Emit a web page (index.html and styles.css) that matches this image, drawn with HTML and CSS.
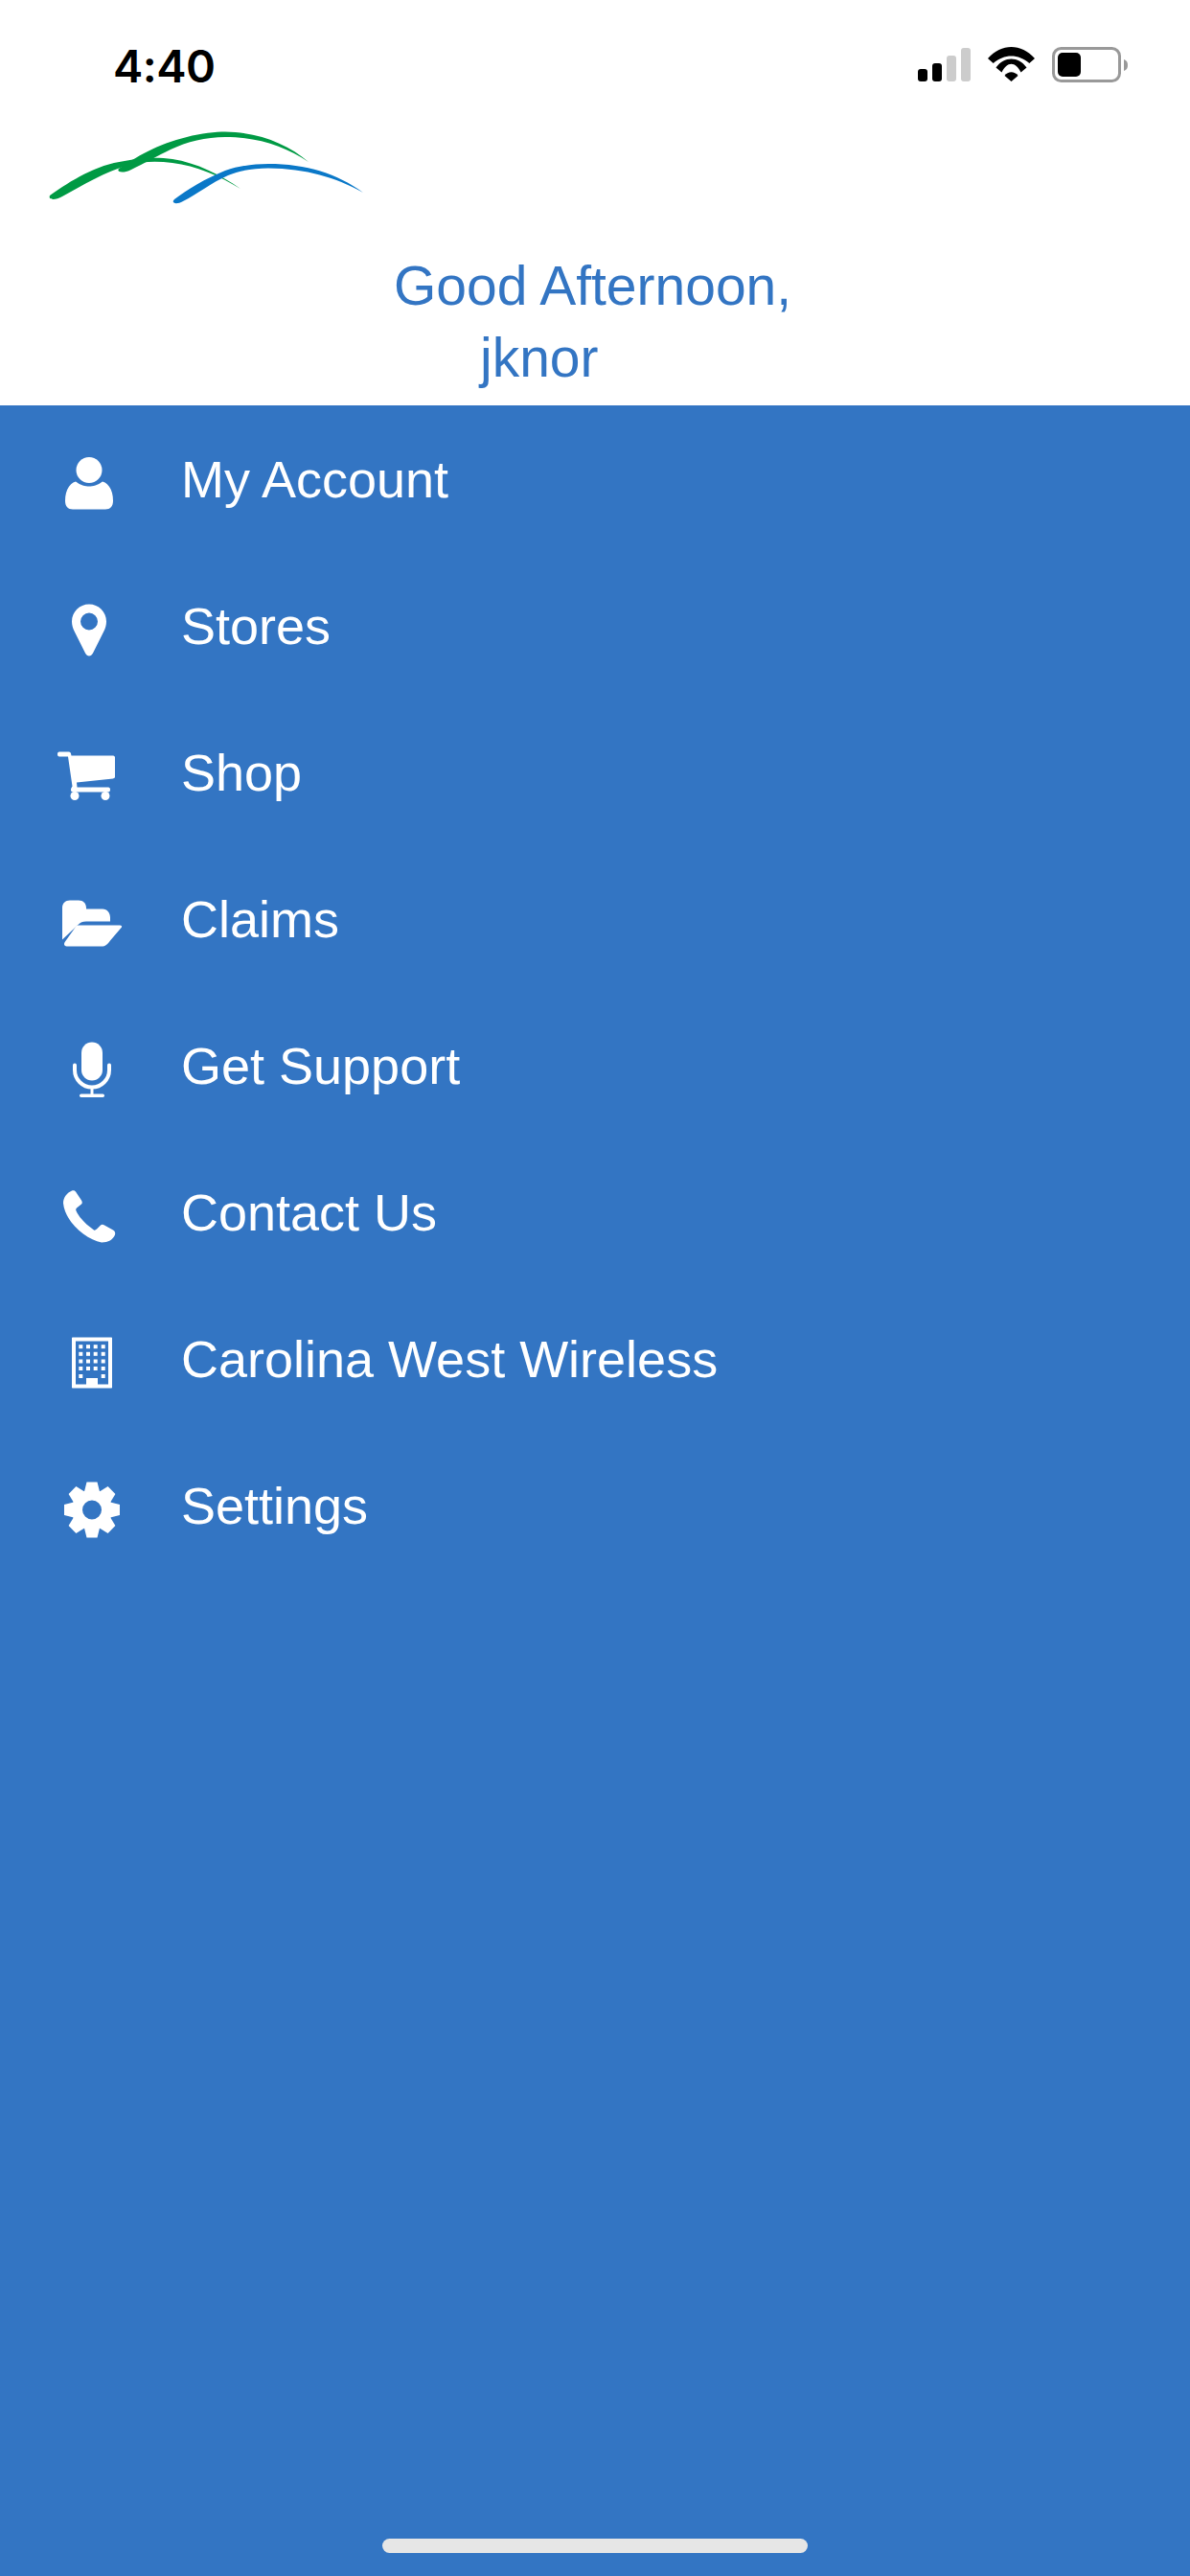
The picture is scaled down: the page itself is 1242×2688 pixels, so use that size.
FILE: index.html
```html
<!doctype html>
<html lang="en-us">

<head>
    <title>Menu</title>
    <link rel="stylesheet" href="styles.css">
</head>

<body>
    <div id="main-container">
        <div class="header">
            <div class="status-bar">
                <span class="clock">4:40</span>
                <div class="status-icons">
                    <svg width="55" height="37" viewBox="0 0 55 37">
                        <rect x="0" y="23" width="10" height="13" rx="3" fill="#000" />
                        <rect x="15" y="17" width="10" height="19" rx="3" fill="#000" />
                        <rect x="30" y="9" width="10" height="27" rx="3" fill="#ccc" />
                        <rect x="45" y="1" width="10" height="35" rx="3" fill="#ccc" />
                    </svg>
                    <svg width="49" height="37" viewBox="0 0 49 37">
                        <path d="M0 12 C14 -4 35 -4 49 12 L43.300 17 C32 7 17 7 5.700 17Z" fill="#000" />
                        <path d="M8.500 21.500 C17 9.500 32 9.500 40.500 21.500 L34.500 26.500 C29 14.800 20 14.800 14.500 26.500Z" fill="#000" />
                        <path d="M17.500 30 C21 25 28 25 31.500 30 L24.500 36Z" fill="#000" />
                    </svg>
                    <svg width="79" height="37" viewBox="0 0 79 37">
                        <rect x="1.500" y="1.500" width="69" height="34" rx="8" fill="none" stroke="#999" stroke-width="3" />
                        <rect x="6" y="6" width="24" height="25" rx="5" fill="#000" />
                        <path d="M75 13 C78 14 79 16 79 19 C79 22 78 24 75 25Z" fill="#999" />
                    </svg>
                </div>
            </div>
            <svg class="logo" width="420" height="90" viewBox="0 130 420 90">
                <path d="M52 204 C75 188 100 172 130 168 C150 164 165 164 180 166 C205 170 230 182 251 197 C228 183 205 173 180 170 C165 168 150 168 135 172 C110 179 85 194 65 205 C58 209 50 209 52 204Z" fill="#009a44" />
                <path d="M124 176 C140 165 165 150 195 143 C210 139 225 137.500 235 137.500 C270 138 300 150 322 169 C298 153 270 143 235 143 C215 143 195 148 178 156 C165 162 150 171 137 177 C129 181 121 180 124 176Z" fill="#009a44" />
                <path d="M182 208 C195 198 215 186 235 178 C250 173 265 171 280 171 C320 171 352 181 379 201 C350 185 320 176 280 175.500 C265 175.500 250 178 238 183 C220 191 205 203 191 210 C184 214 178 212 182 208Z" fill="#0a78c8" />
            </svg>
            <div class="greeting">
                <div class="greeting-line1">Good Afternoon,</div>
                <div class="greeting-line2">jknor</div>
            </div>
        </div>

        <div class="menu">
            <div class="menu-row">
                <svg class="menu-icon" width="80" height="80" viewBox="50 459.500 80 80">
                    <circle cx="93" cy="490" r="13.500" fill="#fff" />
                    <path d="M79 502 C84 506 89 507 93 507 C97 507 102 506 107 502 C114 504 118 512 118 522 C118 528 115 531 110 531 L76 531 C71 531 68 528 68 522 C68 512 72 504 79 502Z" fill="#fff" />
                </svg>
                <span>My Account</span>
            </div>
            <div class="menu-row">
                <svg class="menu-icon" width="80" height="80" viewBox="50 612.500 80 80">
                    <path fill-rule="evenodd" d="M93 630 C103 630 111 638 111 648 C111 652 110 655 108 659 L97 681 C95 685 91 685 89 681 L78 659 C76 655 75 652 75 648 C75 638 83 630 93 630Z M93 639 A9 9 0 1 0 93 657 A9 9 0 1 0 93 639Z" fill="#fff" />
                </svg>
                <span>Stores</span>
            </div>
            <div class="menu-row">
                <svg class="menu-icon" width="80" height="80" viewBox="50 765.500 80 80">
                    <path d="M62 784 L72 784 C73 784 74 785 74 786 L74.500 788 L118 788 C119.500 788 120 789 120 790 L120 810 C120 811 119.500 811.500 118 812 L80 816 L80.500 821 L113 821 C114.500 821 115 822 115 823.500 C115 825 114.500 826 113 826 L76 826 C74.500 826 74 825 74 823.500 C74 822 75 821 75.500 820 L71 789 L62 789 C60.500 789 60 788 60 786.500 C60 785 60.500 784 62 784Z" fill="#fff" />
                    <circle cx="78" cy="830" r="4.500" fill="#fff" />
                    <circle cx="110" cy="830" r="4.500" fill="#fff" />
                </svg>
                <span>Shop</span>
            </div>
            <div class="menu-row">
                <svg class="menu-icon" width="80" height="80" viewBox="50 918.500 80 80">
                    <path d="M65 947 C65 942 68 939 73 939 L82 939 C87 939 90 942 90 947 L90 948 L107 948 C112 948 115 952 115 957 L115 961 L90 961 C86 961 84 962 82 964 L65 980Z" fill="#fff" />
                    <path d="M82 965 L125 965 C127 965 127.500 966 127 967 L115 981 C112 985 110 987 106 987 L71 987 C67 987 66 985 68 982 L78 968 C79 966 80 965 82 965Z" fill="#fff" />
                </svg>
                <span>Claims</span>
            </div>
            <div class="menu-row">
                <svg class="menu-icon" width="80" height="80" viewBox="50 1071.500 80 80">
                    <rect x="85" y="1087" width="22" height="40" rx="11" fill="#fff" />
                    <path d="M78 1111 L78 1116 C78 1126 86 1134 96 1134 C106 1134 114 1126 114 1116 L114 1111" fill="none" stroke="#fff" stroke-width="4" stroke-linecap="round" />
                    <rect x="94.500" y="1134" width="3" height="8" fill="#fff" />
                    <rect x="83" y="1141" width="26" height="3.500" rx="1.700" fill="#fff" />
                </svg>
                <span>Get Support</span>
            </div>
            <div class="menu-row">
                <svg class="menu-icon" width="80" height="80" viewBox="50 1224.500 80 80">
                    <path d="M75 1242 C77 1241.500 78 1242 79 1243 L85 1252 C86 1254 86 1255 85 1256 L80 1260 C79 1261 79 1262 79.500 1263 C83 1271 91 1278 98 1283 C99 1283.500 100 1283 101 1282 L105 1278 C106 1277 107.500 1277 109 1278 L118 1283 C120 1284 120.500 1286 120 1288 C118 1293 113 1296 106 1296 C90 1293 68 1275 66 1255 C66 1249 70 1244 75 1242Z" fill="#fff" />
                </svg>
                <span>Contact Us</span>
            </div>
            <div class="menu-row">
                <svg class="menu-icon" width="80" height="80" viewBox="50 1377.500 80 80">
                    <path fill-rule="evenodd" d="M76 1395 L116 1395 C116.700 1395 117 1395.300 117 1396 L117 1447 C117 1447.700 116.700 1448 116 1448 L76 1448 C75.300 1448 75 1447.700 75 1447 L75 1396 C75 1395.300 75.300 1395 76 1395Z M79 1399 L79 1444 L90 1444 L90 1437.500 L102 1437.500 L102 1444 L113 1444 L113 1399Z" fill="#fff" />
                    <g fill="#fff">
                        <rect x="82.300" y="1402.700" width="4" height="4" /><rect x="90" y="1402.700" width="4" height="4" /><rect x="97.700" y="1402.700" width="4" height="4" /><rect x="105.700" y="1402.700" width="4" height="4" />
                        <rect x="82.300" y="1410.300" width="4" height="4" /><rect x="90" y="1410.300" width="4" height="4" /><rect x="97.700" y="1410.300" width="4" height="4" /><rect x="105.700" y="1410.300" width="4" height="4" />
                        <rect x="82.300" y="1418" width="4" height="4" /><rect x="90" y="1418" width="4" height="4" /><rect x="97.700" y="1418" width="4" height="4" /><rect x="105.700" y="1418" width="4" height="4" />
                        <rect x="82.300" y="1425.500" width="4" height="4" /><rect x="90" y="1425.500" width="4" height="4" /><rect x="97.700" y="1425.500" width="4" height="4" /><rect x="105.700" y="1425.500" width="4" height="4" />
                        <rect x="82.300" y="1433.500" width="4" height="4" /><rect x="105.700" y="1433.500" width="4" height="4" />
                    </g>
                </svg>
                <span>Carolina West Wireless</span>
            </div>
            <div class="menu-row">
                <svg class="menu-icon" width="80" height="80" viewBox="50 1530.500 80 80">
                    <g transform="translate(96 1575)" fill="#fff">
                        <circle r="15.500" fill="none" stroke="#fff" stroke-width="11" />
                        <polygon points="-8,-19 -5.500,-29 5.500,-29 8,-19" />
                        <polygon points="-8,-19 -5.500,-29 5.500,-29 8,-19" transform="rotate(45)" />
                        <polygon points="-8,-19 -5.500,-29 5.500,-29 8,-19" transform="rotate(90)" />
                        <polygon points="-8,-19 -5.500,-29 5.500,-29 8,-19" transform="rotate(135)" />
                        <polygon points="-8,-19 -5.500,-29 5.500,-29 8,-19" transform="rotate(180)" />
                        <polygon points="-8,-19 -5.500,-29 5.500,-29 8,-19" transform="rotate(225)" />
                        <polygon points="-8,-19 -5.500,-29 5.500,-29 8,-19" transform="rotate(270)" />
                        <polygon points="-8,-19 -5.500,-29 5.500,-29 8,-19" transform="rotate(315)" />
                    </g>
                </svg>
                <span>Settings</span>
            </div>
        </div>

        <div class="home-bar"></div>
    </div>
</body>

</html>
```

FILE: styles.css
```css
html, body {
    margin: 0;
    padding: 0;
}

#main-container {
    width: 1242px;
    height: 2688px;
    display: flex;
    flex-direction: column;
    background-color: #3375c3;
    font-family: 'Liberation Sans', Arial, sans-serif;
    overflow: hidden;
}

.header {
    height: 423px;
    flex: none;
    background-color: #fff;
}

.status-bar {
    height: 130px;
    box-sizing: border-box;
    padding: 36px 65px 0 118px;
    display: flex;
    justify-content: space-between;
    align-items: flex-start;
}

.clock {
    margin-top: 3px;
    font-family: 'Inter', sans-serif;
    font-size: 47px;
    line-height: 60px;
    font-weight: 600;
    letter-spacing: -0.5px;
    color: #000;
}

.status-icons {
    display: flex;
    align-items: flex-start;
    gap: 18px;
    padding-top: 13px;
}

.logo {
    display: block;
}

.greeting {
    margin-top: 41px;
    color: #3375c3;
    font-size: 57px;
    line-height: 75px;
}

.greeting-line1 {
    margin-left: 411px;
}

.greeting-line2 {
    margin-left: 501px;
}

.menu {
    display: flex;
    flex-direction: column;
}

.menu-row {
    height: 153px;
    display: flex;
    align-items: center;
    color: #fff;
    font-size: 54px;
}

.menu-icon {
    margin-left: 50px;
    margin-right: 59px;
    flex: none;
}

.home-bar {
    width: 444px;
    height: 15px;
    border-radius: 8px;
    background-color: #e6e6e6;
    margin: auto auto 24px;
}
```
